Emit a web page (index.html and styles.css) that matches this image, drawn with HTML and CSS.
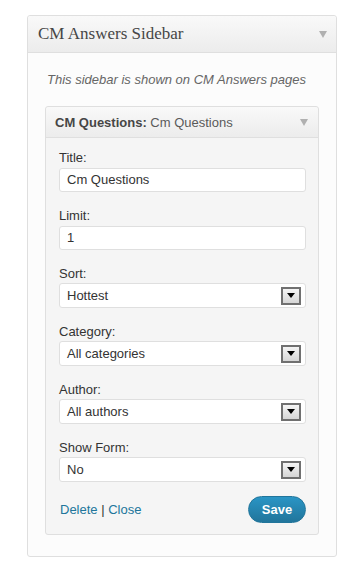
FILE: index.html
```html
<!DOCTYPE html>
<html lang="en">
<head>
  <meta charset="UTF-8" />
  <title>CM Answers Sidebar</title>
  <link rel="stylesheet" href="styles.css">
</head>
<body>

<div class="sidebar">
  <div class="sidebar-head">
    <h3>CM Answers Sidebar</h3>
    <span class="toggle"></span>
  </div>

  <div class="sidebar-body">
    <p class="description">This sidebar is shown on CM Answers pages</p>

    <div class="widget">
      <div class="widget-head">
        <h4><strong>CM Questions:</strong> <span class="in-title">Cm Questions</span></h4>
        <span class="toggle"></span>
      </div>

      <div class="widget-inside">
        <div class="field">
          <label>Title:</label>
          <div class="text-input">Cm Questions</div>
        </div>
        <div class="field">
          <label>Limit:</label>
          <div class="text-input">1</div>
        </div>
        <div class="field">
          <label>Sort:</label>
          <div class="select"><span>Hottest</span><span class="select-btn"></span></div>
        </div>
        <div class="field">
          <label>Category:</label>
          <div class="select"><span>All categories</span><span class="select-btn"></span></div>
        </div>
        <div class="field">
          <label>Author:</label>
          <div class="select"><span>All authors</span><span class="select-btn"></span></div>
        </div>
        <div class="field">
          <label>Show Form:</label>
          <div class="select"><span>No</span><span class="select-btn"></span></div>
        </div>

        <div class="widget-control">
          <div class="links"><a href="#">Delete</a> | <a href="#">Close</a></div>
          <button class="save-button">Save</button>
        </div>
      </div>
    </div>
  </div>
</div>

</body>
</html>
```

FILE: styles.css
```css
* {
  box-sizing: border-box;
}

body {
  margin: 0;
  background: #fff;
  font-family: 'Liberation Sans', Arial, sans-serif;
  font-size: 13px;
  color: #333;
}

.sidebar {
  width: 310px;
  margin: 15px 0 0 27px;
  border: 1px solid #dfdfdf;
  border-radius: 3px;
  background: #fcfcfc;
}

.sidebar-head {
  height: 37px;
  display: flex;
  align-items: center;
  justify-content: space-between;
  padding: 0 9px 0 10px;
  background: linear-gradient(#f9f9f9, #ececec);
  border-bottom: 1px solid #dfdfdf;
  border-radius: 3px 3px 0 0;
}

.sidebar-head h3 {
  margin: 0;
  font-family: 'Liberation Serif', 'Times New Roman', serif;
  font-weight: normal;
  font-size: 17px;
  color: #464646;
}

.toggle {
  width: 0;
  height: 0;
  border-left: 4px solid transparent;
  border-right: 4px solid transparent;
  border-top: 7px solid #b0b0b0;
}

.sidebar-body {
  padding: 19px 17px 21px 17px;
}

.description {
  margin: 0 0 18px;
  padding-left: 2px;
  font-style: italic;
  line-height: 16px;
  color: #666;
}

.widget {
  border: 1px solid #dfdfdf;
  border-radius: 3px;
  background: #f5f5f5;
}

.widget-head {
  height: 31px;
  display: flex;
  align-items: center;
  justify-content: space-between;
  padding: 0 10px 0 9px;
  background: linear-gradient(#f9f9f9, #ececec);
  border-bottom: 1px solid #dfdfdf;
  border-radius: 3px 3px 0 0;
}

.widget-head h4 {
  margin: 0;
  font-size: 13px;
  font-weight: normal;
  color: #464646;
}

.widget-head strong {
  font-weight: bold;
}

.in-title {
  color: #5a5a5a;
}

.widget-inside {
  padding: 12px 12px 11px 13px;
}

.field {
  margin-bottom: 16px;
}

.field label {
  display: block;
  line-height: 16px;
  margin-bottom: 2px;
}

.text-input {
  height: 24px;
  line-height: 22px;
  padding: 0 7px;
  background: #fff;
  border: 1px solid #dfdfdf;
  border-radius: 3px;
}

.select {
  height: 25px;
  display: flex;
  align-items: center;
  justify-content: space-between;
  padding: 0 4px 0 7px;
  margin-top: -1px;
  background: #fff;
  border: 1px solid #dfdfdf;
  border-radius: 3px;
}

.select-btn {
  width: 20px;
  height: 18px;
  display: flex;
  align-items: center;
  justify-content: center;
  border: 2px solid #707070;
  background: linear-gradient(#f4f4f4, #d6d6d6);
}

.select-btn::after {
  content: "";
  width: 0;
  height: 0;
  border-left: 4px solid transparent;
  border-right: 4px solid transparent;
  border-top: 5px solid #000;
}

.widget-control {
  display: flex;
  align-items: center;
  justify-content: space-between;
  margin-top: -2px;
}

.links {
  padding-left: 1px;
  color: #333;
}

.links a {
  color: #21759b;
  text-decoration: none;
}

.save-button {
  width: 58px;
  height: 27px;
  border: 1px solid #21759b;
  border-radius: 14px;
  background: linear-gradient(#2a95c5, #21759b);
  color: #fff;
  font-family: 'Liberation Sans', Arial, sans-serif;
  font-size: 13px;
  font-weight: bold;
  cursor: pointer;
}
```
